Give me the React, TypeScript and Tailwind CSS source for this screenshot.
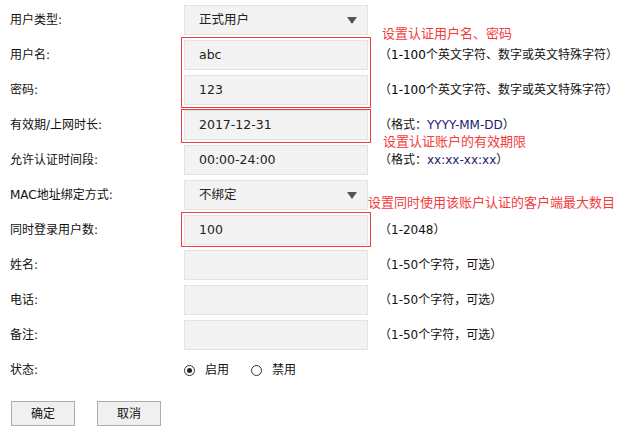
import React from 'react';

type Row = {
  label: string;
  value?: string;
  select?: boolean;
  hint?: React.ReactNode;
};

const num = 'text-[#000]';

const rows: Row[] = [
  { label: '用户类型:', value: '正式用户', select: true },
  { label: '用户名:', value: 'abc', hint: <>（<span className={num}>1-100</span>个英文字符、数字或英文特殊字符）</> },
  { label: '密码:', value: '123', hint: <>（<span className={num}>1-100</span>个英文字符、数字或英文特殊字符）</> },
  { label: '有效期/上网时长:', value: '2017-12-31', hint: <>（格式：<span className="text-[#1a1a6e]">YYYY-MM-DD</span>）</> },
  { label: '允许认证时间段:', value: '00:00-24:00', hint: <>（格式：<span className="text-[#1a1a6e]">xx:xx-xx:xx</span>）</> },
  { label: 'MAC地址绑定方式:', value: '不绑定', select: true },
  { label: '同时登录用户数:', value: '100', hint: <>（1-2048）</> },
  { label: '姓名:', value: '', hint: <>（1-50个字符，可选）</> },
  { label: '电话:', value: '', hint: <>（1-50个字符，可选）</> },
  { label: '备注:', value: '', hint: <>（1-50个字符，可选）</> },
];

const Radio: React.FC<{ checked?: boolean; label: string }> = ({ checked, label }) => (
  <label className="flex items-center gap-[10px]">
    <span className="w-[11px] h-[11px] rounded-full border border-[#333] bg-white flex items-center justify-center">
      {checked && <span className="w-[5px] h-[5px] rounded-full bg-[#222]" />}
    </span>
    <span>{label}</span>
  </label>
);

const App: React.FC = () => {
  return (
    <div
      className="relative w-[622px] h-[434px] bg-white text-[12px] text-[#111] pt-[5px]"
      style={{ fontFamily: '"DejaVu Sans", "Noto Sans CJK SC", sans-serif' }}
    >
      {rows.map((r) => (
        <div key={r.label} className="flex items-center h-[30px] mb-[5px]">
          <div className="w-[184px] pl-[10px]">{r.label}</div>
          <div className="w-[184px] h-[30px] bg-[#f3f3f3] border border-[#e3e3e3] flex items-center justify-between pl-[14px] pr-[10px] text-[12.5px] text-[#222]">
            <span>{r.value}</span>
            {r.select && (
              <svg width="10" height="7" viewBox="0 0 10 7">
                <path d="M0 0 H10 L5 7 Z" fill="#555" />
              </svg>
            )}
          </div>
          {r.hint && <div className="ml-[11px]">{r.hint}</div>}
        </div>
      ))}

      {/* status */}
      <div className="flex items-center h-[30px]">
        <div className="w-[184px] pl-[10px]">状态:</div>
        <div className="flex items-center gap-[22px]">
          <Radio checked label="启用" />
          <Radio label="禁用" />
        </div>
      </div>

      {/* buttons */}
      <div className="flex gap-[22px] pl-[11px] mt-[16px]">
        <button className="w-[64px] h-[25px] bg-[#f0f0f0] border border-[#adadad] text-[12px]">确定</button>
        <button className="w-[64px] h-[25px] bg-[#f0f0f0] border border-[#adadad] text-[12px]">取消</button>
      </div>

      {/* red annotations */}
      <div className="absolute left-[181px] top-[37px] w-[190px] h-[71px] border border-[#f03c3c]" />
      <div className="absolute left-[181px] top-[109px] w-[190px] h-[34px] border border-[#f03c3c]" />
      <div className="absolute left-[181px] top-[212px] w-[190px] h-[35px] border border-[#f03c3c]" />
      <div className="absolute left-[382px] top-[24px] text-[13px] text-[#f23c3c]">设置认证用户名、密码</div>
      <div className="absolute left-[383px] top-[132px] text-[13px] text-[#f23c3c]">设置认证账户的有效期限</div>
      <div className="absolute left-[368px] top-[193px] text-[13px] text-[#f23c3c]">设置同时使用该账户认证的客户端最大数目</div>
    </div>
  );
};

export default App;
